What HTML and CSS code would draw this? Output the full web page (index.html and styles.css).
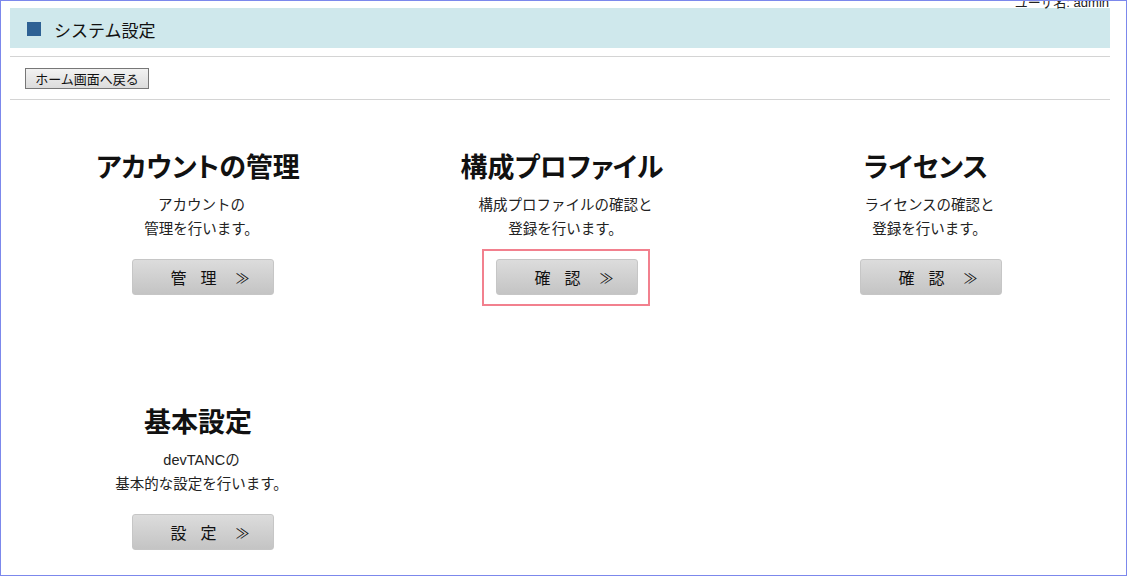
FILE: index.html
```html
<!DOCTYPE html>
<html lang="ja">

<head>
    <meta charset="UTF-8">
    <title>システム設定</title>
    <link rel="stylesheet" href="styles.css">
</head>

<body>
    <div class="frame">
        <!-- ユーザ名 -->
        <div class="user-name">ユーザ名: admin</div>

        <!-- タイトル -->
        <div class="page-title">
            <span class="title-mark"></span>
            <h1>システム設定</h1>
        </div>

        <div class="toolbar">
            <button class="back-btn" type="button">ホーム画面へ戻る</button>
        </div>

        <!-- メニュー -->
        <div class="menu-grid">
            <div class="menu-item">
                <h2>アカウントの管理</h2>
                <p>アカウントの<br>管理を行います。</p>
                <a class="menu-btn" href="#">管<span class="gap"></span>理<span class="arrow">≫</span></a>
            </div>
            <div class="menu-item">
                <h2>構成プロファイル</h2>
                <p>構成プロファイルの確認と<br>登録を行います。</p>
                <a class="menu-btn focused" href="#">確<span class="gap"></span>認<span class="arrow">≫</span></a>
            </div>
            <div class="menu-item">
                <h2>ライセンス</h2>
                <p>ライセンスの確認と<br>登録を行います。</p>
                <a class="menu-btn" href="#">確<span class="gap"></span>認<span class="arrow">≫</span></a>
            </div>
            <div class="menu-item">
                <h2>基本設定</h2>
                <p>devTANCの<br>基本的な設定を行います。</p>
                <a class="menu-btn" href="#">設<span class="gap"></span>定<span class="arrow">≫</span></a>
            </div>
        </div>
    </div>
</body>

</html>
```

FILE: styles.css
```css
/* 全体 */

* {
    margin: 0;
    padding: 0;
    box-sizing: border-box;
}

body {
    font-family: "Liberation Sans", "Noto Sans CJK JP", sans-serif;
    color: #111;
    background: #fff;
}

.frame {
    position: relative;
    width: 1127px;
    height: 576px;
    border: 1px solid #7c88ec;
    padding: 7px 16px 0 9px;
    overflow: hidden;
}

.user-name {
    position: absolute;
    top: -9px;
    right: 17px;
    font-size: 13px;
    color: #222;
}

/* タイトル */

.page-title {
    display: flex;
    align-items: center;
    height: 40px;
    padding-left: 17px;
    padding-top: 2px;
    background-color: #cfe8ec;
}

.title-mark {
    width: 14px;
    height: 14px;
    margin-top: -1px;
    background-color: #2e6194;
    margin-right: 13px;
}

.page-title h1 {
    font-size: 17px;
    font-weight: normal;
    color: #111;
}

.toolbar {
    margin-top: 8px;
    padding: 11px 15px 10px;
    border-top: 1px solid #d4d4d4;
    border-bottom: 1px solid #d4d4d4;
}

.back-btn {
    display: block;
    width: 124px;
    height: 21px;
    font-family: "Noto Sans CJK JP", sans-serif;
    font-size: 13px;
    line-height: 18px;
    color: #111;
    border: 1px solid #777;
    background: linear-gradient(#f2f2f2, #dcdcdc);
}

/* メニュー */

.menu-grid {
    display: grid;
    grid-template-columns: repeat(3, 364px);
    row-gap: 108px;
    padding-top: 48px;
    padding-left: 11px;
}

.menu-item {
    display: flex;
    flex-direction: column;
    align-items: center;
    text-align: center;
}

.menu-item h2 {
    font-family: "Noto Sans CJK JP", sans-serif;
    font-feature-settings: "palt";
    font-size: 27px;
    line-height: 36px;
    font-weight: bold;
    color: #111;
    padding-right: 10px;
    margin-bottom: 9px;
}

.menu-item p {
    font-size: 14.5px;
    line-height: 24px;
    color: #222;
    padding-right: 3px;
    margin-bottom: 18px;
}

.menu-btn {
    position: relative;
    display: flex;
    align-items: center;
    justify-content: center;
    width: 142px;
    height: 36px;
    padding-left: 14px;
    font-family: "Noto Sans CJK JP", sans-serif;
    font-size: 16px;
    color: #111;
    text-decoration: none;
    border-radius: 3px;
    border: 1px solid #c6c6c6;
    background: linear-gradient(#dcdcdc, #c4c4c4);
}

.menu-btn .gap {
    width: 14px;
}

.menu-btn .arrow {
    margin-left: 19px;
    font-size: 14px;
}

.focused::after {
    content: "";
    position: absolute;
    top: -11px;
    bottom: -12px;
    left: -15px;
    right: -13px;
    border: 2px solid #f2808e;
}
```
